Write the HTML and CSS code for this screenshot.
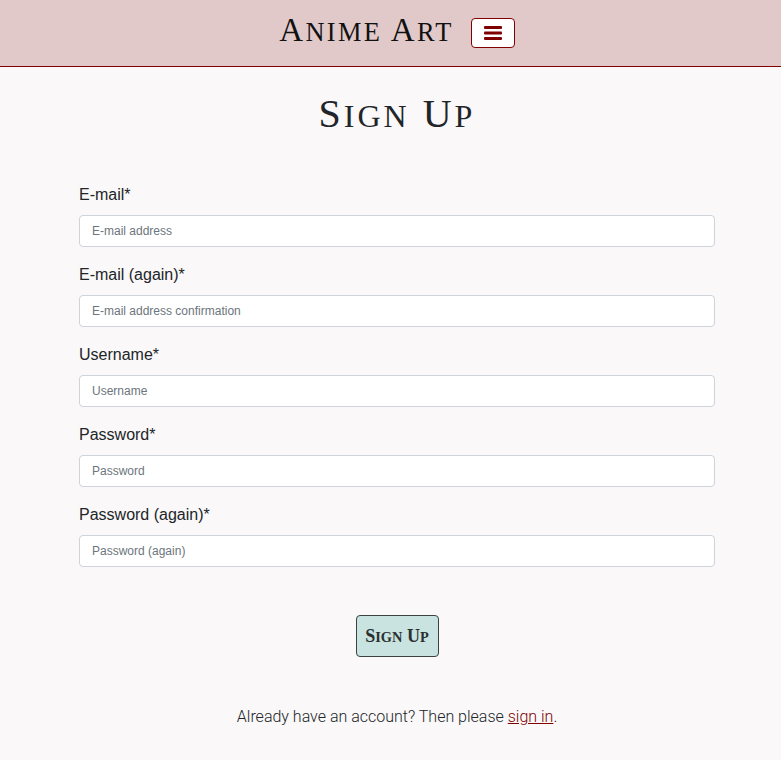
FILE: index.html
```html
<!DOCTYPE html>
<html lang="en">
<head>
<meta charset="utf-8">
<title>Sign Up | Anime Art</title>
<link rel="stylesheet" href="styles.css">
</head>
<body>
<header class="site-header">
  <div class="header-inner">
    <a class="brand" href="#">A<span class="sc">nime</span> A<span class="sc">rt</span></a>
    <button class="nav-toggle" type="button" aria-label="Menu">
      <svg width="18" height="14" viewBox="0 0 18 14"><rect x="0" y="0" width="18" height="3" rx="1" fill="#800000"/><rect x="0" y="5.5" width="18" height="3" rx="1" fill="#800000"/><rect x="0" y="11" width="18" height="3" rx="1" fill="#800000"/></svg>
    </button>
  </div>
</header>
<main class="page">
  <h1 class="page-title">S<span class="sc">ign</span> U<span class="sc">p</span></h1>
  <form class="signup-form">
    <div class="field">
      <label class="field-label" for="email">E-mail*</label>
      <input class="field-input" id="email" type="email" placeholder="E-mail address">
    </div>
    <div class="field">
      <label class="field-label" for="email2">E-mail (again)*</label>
      <input class="field-input" id="email2" type="email" placeholder="E-mail address confirmation">
    </div>
    <div class="field">
      <label class="field-label" for="username">Username*</label>
      <input class="field-input" id="username" type="text" placeholder="Username">
    </div>
    <div class="field">
      <label class="field-label" for="password">Password*</label>
      <input class="field-input" id="password" type="password" placeholder="Password">
    </div>
    <div class="field">
      <label class="field-label" for="password2">Password (again)*</label>
      <input class="field-input" id="password2" type="password" placeholder="Password (again)">
    </div>
    <div class="actions">
      <button class="submit-btn" type="submit">S<span class="sc">ign</span> U<span class="sc">p</span></button>
    </div>
  </form>
  <p class="signin-note">Already have an account? Then please <a class="signin-link" href="#">sign in</a>.</p>
</main>
</body>
</html>
```
FILE: styles.css
```css
html, body {
  margin: 0;
  padding: 0;
}
body {
  background: #faf8f8;
  color: #212529;
  font-family: "Liberation Sans", Arial, sans-serif;
}
.sc {
  text-transform: uppercase;
  font-size: 0.8em;
}
.site-header {
  background: #e2c9c9;
  border-bottom: 1px solid #800000;
  height: 66px;
}
.header-inner {
  margin-left: 13px;
  height: 66px;
  display: flex;
  align-items: center;
  justify-content: center;
  gap: 17px;
}
.brand {
  font-family: "Liberation Serif", "Times New Roman", serif;
  font-size: 33px;
  color: #111;
  text-decoration: none;
  letter-spacing: 2.3px;
  line-height: 1;
  margin-top: -5px;
}
.nav-toggle {
  width: 44px;
  height: 30px;
  background: #fff;
  border: 1px solid #800000;
  border-radius: 4px;
  display: flex;
  align-items: center;
  justify-content: center;
  padding: 0;
}
.page {
  margin-left: 13px;
}
.page-title {
  font-family: "Liberation Serif", "Times New Roman", serif;
  font-weight: normal;
  font-size: 40px;
  letter-spacing: 3px;
  text-align: center;
  margin: 23px 0 43px;
  line-height: 48px;
  color: #212529;
}
.signup-form {
  width: 636px;
  margin-left: 66px;
}
.field {
  display: flex;
  flex-direction: column;
  margin-bottom: 16px;
}
.field-label {
  font-size: 16px;
  line-height: 24px;
  margin-bottom: 8px;
  color: #212529;
}
.field-input {
  height: 32px;
  box-sizing: border-box;
  border: 1px solid #ced4da;
  border-radius: 4px;
  background: #fff;
  padding: 4px 12px;
  font-family: "Liberation Sans", Arial, sans-serif;
  font-size: 12px;
  color: #212529;
}
.field-input::placeholder {
  color: #6c757d;
}
.actions {
  display: flex;
  justify-content: center;
  padding-top: 32px;
}
.submit-btn {
  width: 83px;
  height: 42px;
  background: #c8e3e0;
  border: 1px solid #39443f;
  border-radius: 4px;
  font-family: "Liberation Serif", "Times New Roman", serif;
  font-weight: bold;
  font-size: 18px;
  color: #2b2f2f;
  padding: 0;
}
.signin-note {
  text-align: center;
  font-family: Roboto, "Liberation Sans", sans-serif;
  font-weight: 300;
  font-size: 16px;
  line-height: 24px;
  margin: 48px 0 0;
  color: #212529;
}
.signin-link {
  color: #800000;
}
```
